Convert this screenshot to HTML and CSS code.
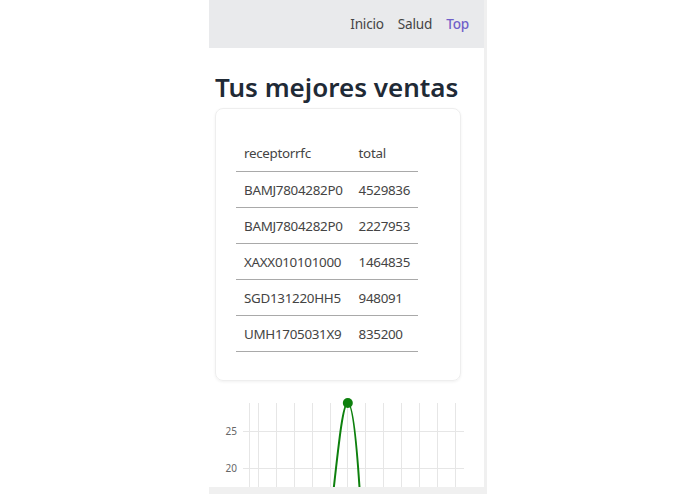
FILE: index.html
```html
<!DOCTYPE html>
<html lang="es">
<head>
<meta charset="utf-8">
<title>Top ventas</title>
<link rel="stylesheet" href="styles.css">
</head>
<body>
<div class="frame">
  <div class="viewport">
    <nav class="navbar">
      <a class="nav-link" href="#">Inicio</a>
      <a class="nav-link" href="#">Salud</a>
      <a class="nav-link active" href="#">Top</a>
    </nav>
    <main class="page">
      <h1 class="title">Tus mejores ventas</h1>
      <section class="card">
        <table class="sales">
          <thead>
            <tr><th>receptorrfc</th><th>total</th></tr>
          </thead>
          <tbody>
            <tr><td>BAMJ7804282P0</td><td>4529836</td></tr>
            <tr><td>BAMJ7804282P0</td><td>2227953</td></tr>
            <tr><td>XAXX010101000</td><td>1464835</td></tr>
            <tr><td>SGD131220HH5</td><td>948091</td></tr>
            <tr><td>UMH1705031X9</td><td>835200</td></tr>
          </tbody>
        </table>
      </section>
      <div class="chart">
        <svg width="275" height="100" viewBox="0 0 275 100">
          <g stroke="#e6e6e6" stroke-width="1">
            <line x1="40.5" y1="12" x2="40.5" y2="100"/>
            <line x1="49.5" y1="12" x2="49.5" y2="100"/>
            <line x1="67.5" y1="12" x2="67.5" y2="100"/>
            <line x1="85.5" y1="12" x2="85.5" y2="100"/>
            <line x1="103.5" y1="12" x2="103.5" y2="100"/>
            <line x1="121.5" y1="12" x2="121.5" y2="100"/>
            <line x1="138.5" y1="12" x2="138.5" y2="100"/>
            <line x1="156.5" y1="12" x2="156.5" y2="100"/>
            <line x1="174.5" y1="12" x2="174.5" y2="100"/>
            <line x1="192.5" y1="12" x2="192.5" y2="100"/>
            <line x1="210.5" y1="12" x2="210.5" y2="100"/>
            <line x1="228.5" y1="12" x2="228.5" y2="100"/>
            <line x1="246.5" y1="12" x2="246.5" y2="100"/>
            <line x1="34" y1="40.5" x2="255" y2="40.5"/>
            <line x1="34" y1="77.5" x2="255" y2="77.5"/>
          </g>
          <g class="axis-label" fill="#666" font-size="10" text-anchor="end">
            <text x="28" y="44">25</text>
            <text x="28" y="81">20</text>
          </g>
          <path d="M124,104 C130,50 134,12 138.8,12 C143.6,12 147.6,50 151,104" fill="none" stroke="#0d800d" stroke-width="2"/>
          <circle cx="138.8" cy="12" r="5" fill="#0d800d"/>
        </svg>
      </div>
    </main>
  </div>
  <div class="vscroll"></div>
  <div class="hscroll"></div>
</div>
</body>
</html>
```
FILE: styles.css
```css
html, body {
  margin: 0;
  padding: 0;
  background: #fff;
}

body {
  font-family: "Noto Sans", "Open Sans", sans-serif;
  color: #444;
  height: 494px;
  overflow: hidden;
}

.frame {
  width: 278px;
  height: 494px;
  margin: 0 auto 0 209px;
  display: grid;
  grid-template-columns: 275px 3px;
  grid-template-rows: 487px 7px;
}

.viewport {
  overflow: hidden;
  background: #fff;
}

.vscroll {
  background: #f0f0f0;
}

.hscroll {
  grid-column: 1 / span 2;
  background: #f0f0f0;
}

.navbar {
  height: 48px;
  background: #e9eaec;
  display: flex;
  justify-content: flex-end;
  align-items: center;
  gap: 14px;
  padding: 0 15px 0 0;
  box-sizing: border-box;
}

.nav-link {
  font-size: 13.6px;
  letter-spacing: -0.2px;
  color: #444;
  text-decoration: none;
  line-height: 20px;
}

.nav-link.active {
  color: #6f5fc9;
  font-weight: 500;
}

.page {
  padding: 0 0 0 6px;
}

.title {
  margin: 22px 0 4px 0;
  font-size: 26px;
  line-height: 34px;
  font-weight: 600;
  color: #1f2a36;
}

.card {
  width: 246px;
  box-sizing: border-box;
  border: 1px solid #eeeeee;
  border-radius: 8px;
  box-shadow: 0 1px 3px rgba(0, 0, 0, 0.06);
  padding: 26px 20px 28px 20px;
}

.sales {
  border-collapse: collapse;
  font-size: 13.4px;
  letter-spacing: -0.3px;
  color: #444;
}

.sales th,
.sales td {
  text-align: left;
  font-weight: 400;
  padding: 0 8px;
  height: 35px;
  border-bottom: 1px solid #a9a9a9;
  white-space: nowrap;
}

.sales th {
  height: 36px;
}

.chart {
  margin: 10px 0 0 -6px;
  height: 100px;
}

.chart svg {
  display: block;
}

.axis-label {
  font-family: "Noto Sans", "Open Sans", sans-serif;
}
```
